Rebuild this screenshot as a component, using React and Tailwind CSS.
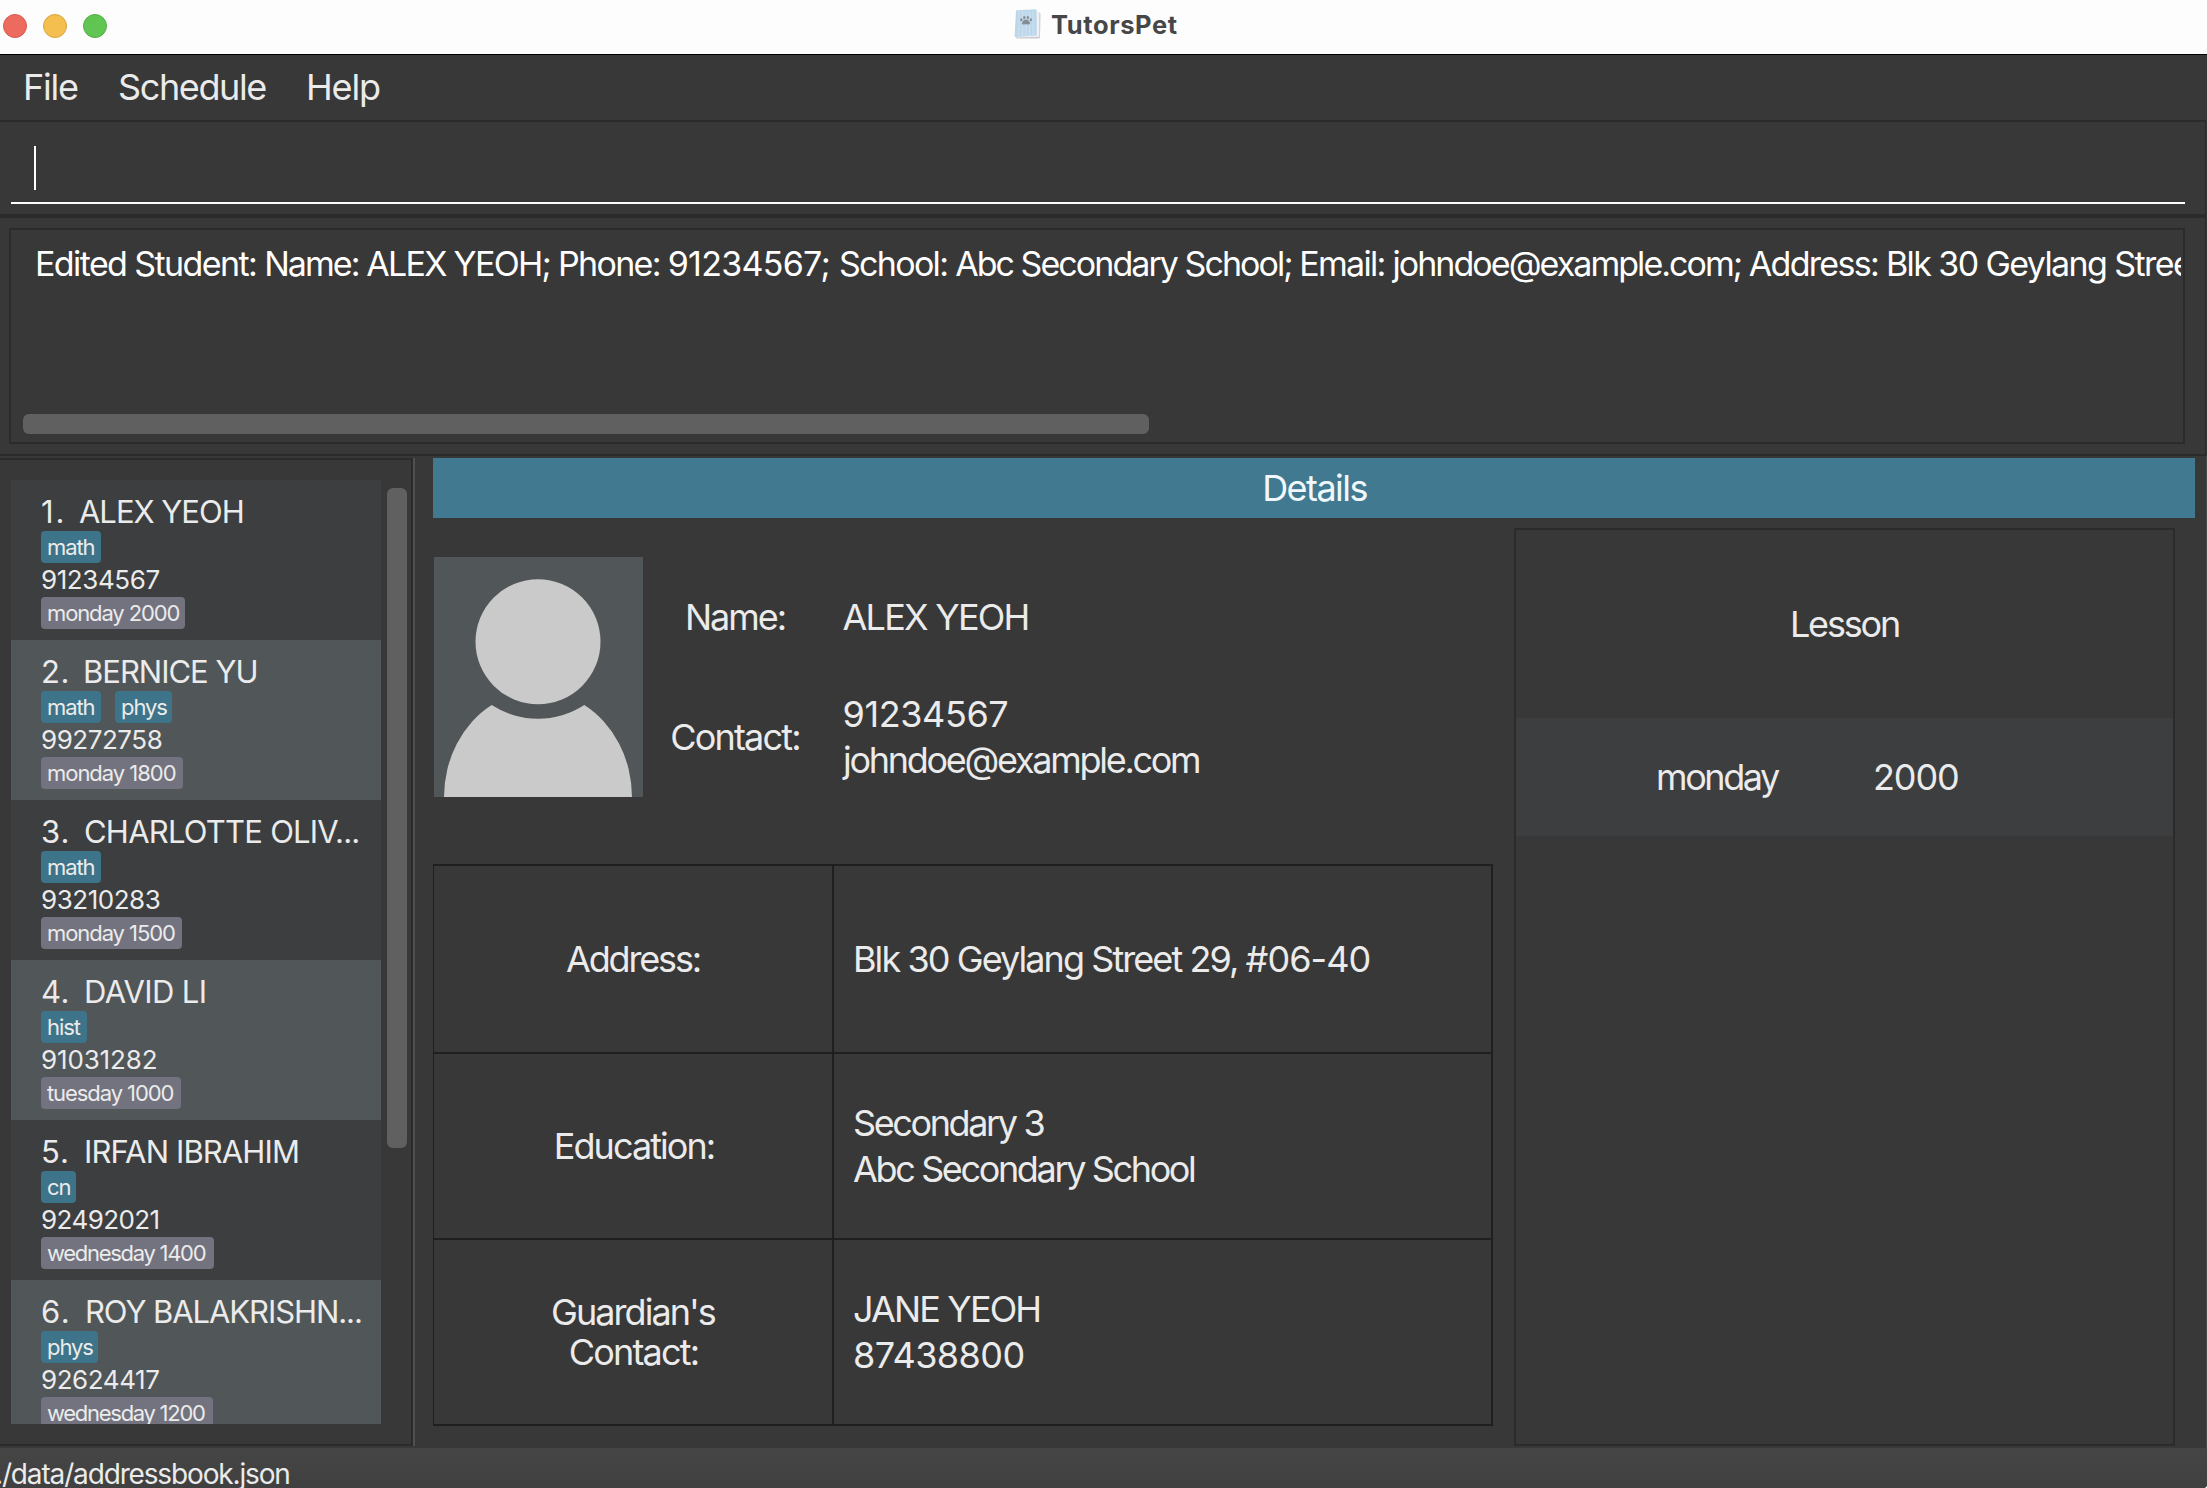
import React from "react";

const students = [
  {
    index: "1.", indexClass: "w-[38px] tracking-[2px]", name: "ALEX YEOH", nameClass: "tracking-[-1.02px]",
    tags: [{ text: "math", box: "w-[60px]" }],
    phone: "91234567", phoneClass: "tracking-[-0.42px]",
    time: "monday 2000", timeClass: "w-[144px] tracking-[-1.12px]",
  },
  {
    index: "2.", indexClass: "w-[42px] tracking-[0.5px]", name: "BERNICE YU", nameClass: "tracking-[-1.02px]",
    tags: [{ text: "math", box: "w-[60px]" }, { text: "phys", box: "w-[57px]" }],
    phone: "99272758", phoneClass: "tracking-[-0.46px]",
    time: "monday 1800", timeClass: "w-[142px] tracking-[-1.03px]",
  },
  {
    index: "3.", indexClass: "w-[43px] tracking-[1px]", name: "CHARLOTTE OLIV...", nameClass: "tracking-[-0.77px]",
    tags: [{ text: "math", box: "w-[60px]" }],
    phone: "93210283", phoneClass: "tracking-[-0.46px]",
    time: "monday 1500", timeClass: "w-[141px] tracking-[-1.07px]",
  },
  {
    index: "4.", indexClass: "w-[43px] tracking-[0.5px]", name: "DAVID LI", nameClass: "tracking-[-0.6px]",
    tags: [{ text: "hist", box: "w-[46px]" }],
    phone: "91031282", phoneClass: "tracking-[-0.15px]",
    time: "tuesday 1000", timeClass: "w-[140px] tracking-[-1.08px]",
  },
  {
    index: "5.", indexClass: "w-[43px] tracking-[1px]", name: "IRFAN IBRAHIM", nameClass: "tracking-[-0.88px]",
    tags: [{ text: "cn", box: "w-[35px]" }],
    phone: "92492021", phoneClass: "tracking-[-0.58px]",
    time: "wednesday 1400", timeClass: "w-[173px] tracking-[-1.29px]",
  },
  {
    index: "6.", indexClass: "w-[44px] tracking-[1.5px]", name: "ROY BALAKRISHN...", nameClass: "tracking-[-1.08px]",
    tags: [{ text: "phys", box: "w-[57px]" }],
    phone: "92624417", phoneClass: "tracking-[-0.44px]",
    time: "wednesday 1200", timeClass: "w-[172px] tracking-[-1.28px]",
  },
];

function AppIcon() {
  return (
    <svg viewBox="0 0 27 30" className="h-[30px] w-[27px]">
      <path d="M2.5 3 L25 3.5 Q26.5 3.6 26.5 5 L26 28 Q26 29.6 24.5 29.6 L2 29.6 Z" fill="#c9c9cd" />
      <path d="M2.5 2.8 L25.300 3.600 L25.200 27.8 L1.2 28.6 Z" fill="#eef2f6" />
      <path d="M2 2 Q2 1.2 3 1.2 L22.5 0.3 L22.8 26.5 L1.6 28 Q0.5 28 0.6 27 Z" fill="#bcd6ea" />
      <path d="M5 2v25M8.500 2v25M12 2v25M15.500 2v25M19 2v24" stroke="#cfe2f1" strokeWidth="1" />
      <g fill="#858d94">
        <path d="M12 10.500c2 0 4 2 4 3.700 0 1.200-1 1.500-2 1.300-1.300-.3-2.700-.3-4 0-1 .2-2-.1-2-1.300 0-1.700 2-3.700 4-3.700z" />
        <ellipse cx="7.400" cy="10.800" rx="1.200" ry="1.500" />
        <ellipse cx="10.300" cy="8.500" rx="1.200" ry="1.600" />
        <ellipse cx="13.900" cy="8.500" rx="1.200" ry="1.600" />
        <ellipse cx="16.800" cy="10.800" rx="1.200" ry="1.500" />
      </g>
    </svg>
  );
}

function Avatar() {
  return (
    <svg viewBox="0 0 209 240" className="h-[240px] w-[209px] shrink-0 bg-[#515658]">
      <circle cx="104" cy="84.700" r="62.500" fill="#cacaca" />
      <path d="M10 240 A94 106 0 0 1 57.700 148 A85 85 0 0 0 150.300 148 A94 106 0 0 1 198 240 Z" fill="#cacaca" />
    </svg>
  );
}

function StudentCard({ s, alt }) {
  return (
    <div className={`h-[160px] shrink-0 pl-[30px] pt-[11px] ${alt ? "bg-[#515658]" : "bg-[#3c3e3f]"}`}>
      <div className="flex h-[40px] text-[31px] leading-[42px]">
        <span className={`shrink-0 ${s.indexClass}`}>{s.index}</span>
        <span className={s.nameClass}>{s.name}</span>
      </div>
      <div className="flex h-[32px] gap-[14px]">
        {s.tags.map((t) => (
          <span key={t.text} className={`h-[32px] rounded-[4px] bg-[#3e7489] pl-[6px] text-[22px] leading-[32px] tracking-[-1.08px] ${t.box}`}>
            {t.text}
          </span>
        ))}
      </div>
      <div className={`h-[34px] text-[26px] leading-[34px] ${s.phoneClass}`}>{s.phone}</div>
      <div className={`h-[32px] rounded-[4px] bg-[#737380] pl-[6px] text-[22px] leading-[32px] ${s.timeClass}`}>{s.time}</div>
    </div>
  );
}

function Row({ label, height, children }) {
  return (
    <div className={`flex border-b-2 border-[#1f1f1f] ${height}`}>
      <div className="flex w-[400px] shrink-0 items-center justify-center border-r-2 border-[#1f1f1f] text-center leading-[40px]">{label}</div>
      <div className="flex flex-col justify-center pl-[19px] leading-[46px]">{children}</div>
    </div>
  );
}

export default function App() {
  return (
    <div className="flex h-[1488px] w-[2207px] flex-col overflow-hidden rounded-br-[4px] whitespace-nowrap bg-[#383838] font-['Inter',sans-serif] text-[#ebebeb]">
      <header className="flex h-[55px] shrink-0 border-b border-black bg-[#fdfdfd]">
        <div className="flex w-[1014px] gap-[16px] pl-[3px] pt-[14px]">
          <span className="size-[24px] rounded-full border border-[#d65a50] bg-[#ec6a5e]" />
          <span className="size-[24px] rounded-full border border-[#d9a641] bg-[#f4bf4f]" />
          <span className="size-[24px] rounded-full border border-[#53ad47] bg-[#61c554]" />
        </div>
        <div className="pt-[9px]"><AppIcon /></div>
        <h1 className="pl-[10px] text-[25.5px] font-bold leading-[50px] tracking-[0.6px] text-[#474747]">TutorsPet</h1>
      </header>

      <nav className="flex h-[65px] shrink-0 text-[36px] leading-[64px]">
        <span className="w-[95px] pl-[23px] tracking-[-1.23px]">File</span>
        <span className="w-[188px] pl-[23px] tracking-[-1.38px]">Schedule</span>
        <span className="pl-[23px] tracking-[-1.15px]">Help</span>
      </nav>

      <section className="mr-px h-[96px] shrink-0 border-y-2 border-r border-[#2b2b2b] pl-[11px] pr-[20px]">
        <div className="h-[82px] border-b-2 border-white pl-[23px] pt-[24px]">
          <div className="h-[44px] w-[2px] bg-white" />
        </div>
      </section>

      <section className="mr-px h-[240px] shrink-0 border-y-2 border-r border-[#2b2b2b] pl-[9px] pr-[20px] pt-[10px]">
        <div className="flex h-[216px] flex-col overflow-hidden border-2 border-[#2b2b2b] pl-[12px] pr-[2px]">
          <div className="h-[184px] overflow-hidden pl-[12px] pt-[8px] text-[34px] leading-[51px] text-white">
            <span className="tracking-[-1.6px]">Edited Student: </span>
            <span className="tracking-[-1.95px]">Name: </span>
            <span className="tracking-[-1.69px]">ALEX YEOH; Phone: </span>
            <span className="tracking-[-0.7px]">91234567; </span>
            <span className="tracking-[-1.69px]">School: </span>
            <span className="tracking-[-1.95px]">Abc Secondary School; </span>
            <span className="tracking-[-1.69px]">Email: </span>
            <span className="tracking-[-1.95px]">johndoe@example.com; </span>
            <span className="tracking-[-1.69px]">Address: </span>
            <span className="tracking-[-1.6px]">Blk 30 Geylang Street 29, #06-40</span>
          </div>
          <div className="h-[20px] w-[1126px] rounded-[6px] bg-[#606060]" />
        </div>
      </section>

      <main className="flex h-[992px] shrink-0 border-r border-[#4a4a4a]">
        <aside className="mt-[2px] flex h-[988px] w-[413px] shrink-0 border-y-2 border-r-2 border-[#2b2b2b] pl-[11px] pt-[20px]">
          <div className="flex h-[944px] w-[370px] flex-col overflow-hidden">
            {students.map((s, i) => (
              <StudentCard key={s.index} s={s} alt={i % 2 === 1} />
            ))}
          </div>
          <div className="ml-[6px] mt-[8px] h-[660px] w-[20px] rounded-[6px] bg-[#606060]" />
        </aside>
        <div className="mt-[2px] h-[988px] w-[2px] bg-[#505050]" />

        <section className="ml-[18px] mt-[2px] w-[1762px] text-[36px]">
          <h2 className="h-[60px] bg-[#417a90] pl-[1px] text-center leading-[60px] tracking-[-1.55px] text-[#f0f8fb]">Details</h2>
          <div className="flex">
            <div className="w-[1060px]">
              <div className="flex h-[346px] pl-px pt-[39px]">
                <Avatar />
                <div className="w-[184px] text-center leading-[120px]">
                  <div className="tracking-[-2.07px]">Name:</div>
                  <div className="tracking-[-1.8px]">Contact:</div>
                </div>
                <div className="pl-[15.5px]">
                  <div className="leading-[120px] tracking-[-1.76px]">ALEX YEOH</div>
                  <div className="flex h-[120px] flex-col justify-center leading-[46px]">
                    <div className="tracking-[-0.4px]">91234567</div>
                    <div className="pl-[0.5px] tracking-[-2.28px]">johndoe@example.com</div>
                  </div>
                </div>
              </div>
              <div className="h-[562px] border-l border-r-2 border-t-2 border-[#1f1f1f]">
                <Row height="h-[188px]" label={<span className="tracking-[-2.15px]">Address:</span>}>
                  <div>
                    <span className="tracking-[-1.93px]">Blk 30 Geylang Street 29, </span>
                    <span className="tracking-[-0.95px]">#06-40</span>
                  </div>
                </Row>
                <Row height="h-[186px]" label={<span className="pl-[2px] tracking-[-1.95px]">Education:</span>}>
                  <span className="tracking-[-2.38px]">Secondary 3</span>
                  <span className="tracking-[-2.36px]">Abc Secondary School</span>
                </Row>
                <Row
                  height="h-[186px]"
                  label={
                    <span>
                      <span className="tracking-[-1.95px]">Guardian's</span>
                      <br />
                      <span className="pl-[1px] tracking-[-1.8px]">Contact:</span>
                    </span>
                  }
                >
                  <span className="tracking-[-1.85px]">JANE YEOH</span>
                  <span className="tracking-[-0.55px]">87438800</span>
                </Row>
              </div>
            </div>
            <div className="ml-[21px] mt-[10px] h-[918px] w-[661px] border-2 border-[#2b2b2b]">
              <div className="h-[188px] text-center leading-[188px] tracking-[-2.19px]">Lesson</div>
              <div className="flex h-[118px] bg-[#3c3e3f] pl-[140px] leading-[118px]">
                <span className="w-[217px] tracking-[-2.4px]">monday</span>
                <span className="tracking-[-1.1px]">2000</span>
              </div>
            </div>
          </div>
        </section>
      </main>

      <footer className="h-[40px] shrink-0 bg-linear-to-b from-[#454545] to-[#404040]">
        <div className="ml-[-5px] text-[28px] leading-[52px] tracking-[-1.15px]">./data/addressbook.json</div>
      </footer>
    </div>
  );
}
